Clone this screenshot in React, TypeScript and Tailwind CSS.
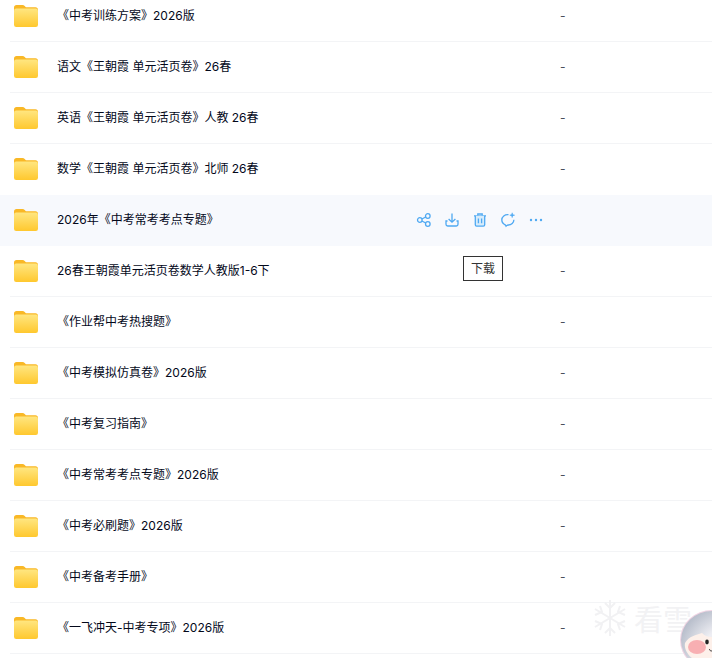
const rows = [
  "《中考训练方案》2026版",
  "语文《王朝霞 单元活页卷》26春",
  "英语《王朝霞 单元活页卷》人教 26春",
  "数学《王朝霞 单元活页卷》北师 26春",
  "2026年《中考常考考点专题》",
  "26春王朝霞单元活页卷数学人教版1-6下",
  "《作业帮中考热搜题》",
  "《中考模拟仿真卷》2026版",
  "《中考复习指南》",
  "《中考常考考点专题》2026版",
  "《中考必刷题》2026版",
  "《中考备考手册》",
  "《一飞冲天-中考专项》2026版",
];

const FolderIcon = () => (
  <svg width="24" height="22" viewBox="0 0 24 22" className="shrink-0">
    <defs>
      <linearGradient id="folderFront" x1="0" y1="0" x2="0" y2="1">
        <stop offset="0" stopColor="#ffe680" />
        <stop offset="1" stopColor="#ffc82e" />
      </linearGradient>
    </defs>
    <path d="M0 2.5C0 1 1 0 2.5 0h6c1 0 1.6.4 2.2 1l1.2 1.2H21.5C23 2.2 24 3.2 24 4.7V8H0z" fill="#f9b826" />
    <rect x="0" y="3.6" width="24" height="18.4" rx="2.2" fill="url(#folderFront)" />
  </svg>
);

const ActionIcons = () => (
  <div className="flex items-center gap-[12px] text-[#4fa9f2]">
    <svg width="16" height="16" viewBox="0 0 16 16" fill="none" stroke="currentColor" strokeWidth="1.3">
      <circle cx="3.8" cy="8" r="2.3" />
      <circle cx="11.8" cy="4" r="2.3" />
      <circle cx="11.8" cy="12" r="2.3" />
      <path d="M5.9 7 9.7 5M5.9 9l3.8 2" />
    </svg>
    <svg width="16" height="16" viewBox="0 0 16 16" fill="none" stroke="currentColor" strokeWidth="1.3">
      <path d="M8 1.5v8.500M4.600 7 8 10.200 11.400 7" />
      <path d="M3.500 9H2v3.300c0 1 .7 1.700 1.700 1.700h8.600c1 0 1.700-.7 1.700-1.700V9h-1.500" />
    </svg>
    <svg width="16" height="16" viewBox="0 0 16 16" fill="none" stroke="currentColor" strokeWidth="1.3">
      <path d="M2 3.800h12M5.800 3.600V2h4.400v1.600" />
      <path d="M3.300 3.800v9c0 .8.500 1.300 1.300 1.300h6.800c.8 0 1.300-.5 1.300-1.300v-9" fill="#d7ecfb" />
      <path d="M6.400 6.600v4.600M9.600 6.600v4.600" />
    </svg>
    <svg width="16" height="16" viewBox="0 0 16 16" fill="none" stroke="currentColor" strokeWidth="1.3">
      <path d="M8.500 2.700C4.800 2.300 1.800 4.800 1.800 8c0 2.100 1.100 3.600 2.700 4.500.9.500 1.200.5 1.600 1.700.9-.6 1.100-1.200 2-1.200 3.300 0 5.800-2.200 5.800-5.200" />
      <path d="M12.200 .8c.2 1.700.7 2.200 2.400 2.400-1.700.2-2.200.7-2.400 2.400-.2-1.700-.7-2.200-2.400-2.400 1.700-.2 2.200-.7 2.400-2.400z" fill="currentColor" strokeWidth="0.6" />
    </svg>
    <svg width="16" height="16" viewBox="0 0 16 16" fill="currentColor">
      <circle cx="3" cy="8" r="1.2" />
      <circle cx="8" cy="8" r="1.2" />
      <circle cx="13" cy="8" r="1.2" />
    </svg>
  </div>
);

const Mascot = () => (
  <svg width="32" height="48" viewBox="0 0 32 48" className="absolute right-0 bottom-0">
    <defs>
      <radialGradient id="hood" cx="0.75" cy="0.7" r="0.8">
        <stop offset="0.5" stopColor="#eeeef3" />
        <stop offset="1" stopColor="#b9bfcc" />
      </radialGradient>
    </defs>
    <ellipse cx="32" cy="30" rx="32" ry="30" fill="#f1d5e4" />
    <ellipse cx="32" cy="30" rx="31" ry="29" fill="url(#hood)" />
    <path d="M5 33c4-7 11-8 17-10 3 3 6 4 10 4v21H12C7 44 4 38 5 33z" fill="#fdf0ea" />
    <ellipse cx="17" cy="37" rx="9" ry="7" fill="#f7a3a8" opacity="0.85" />
    <ellipse cx="27" cy="32" rx="1.800" ry="2.400" fill="#222" />
    <path d="M29.500 39c0 1.500.8 2 2.500 2" stroke="#444" fill="none" strokeWidth="1" />
  </svg>
);

const Watermark = () => (
  <div className="absolute left-[593px] top-[599px] flex items-center gap-[7px] opacity-90">
    <svg width="34" height="38" viewBox="0 0 34 38" fill="none" stroke="#f0f0f2" strokeWidth="2">
      <path d="M17 1v36M2 10l30 18M32 10 2 28" />
      <path d="M12 4l5 5 5-5M12 34l5-5 5 5M2 16l7-3-2-6M32 16l-7-3 2-6M2 22l7 3-2 6M32 22l-7 3 2 6" />
    </svg>
    <span className="text-[29px] leading-none text-[#f1f1f3] font-['Noto_Sans_CJK_SC',sans-serif]">看雪</span>
  </div>
);

export default function App() {
  return (
    <div className="relative h-[658px] w-[712px] overflow-hidden bg-white font-['Inter','Noto_Sans_CJK_SC',sans-serif] text-[12px] text-[#03081a]">
      <div className="mt-[-9px] flex flex-col">
        {rows.map((name, i) => (
          <div key={name} className={`h-[51px] ${i === 4 ? "bg-[#f7f9fd]" : ""}`}>
            <div className="flex h-[50px] items-center pl-[14px]">
              <FolderIcon />
              <div className="ml-[19px] w-[359px] truncate">{name}</div>
              <div className="w-[144px]">{i === 4 ? <ActionIcons /> : null}</div>
              {i === 4 ? null : <div className="text-[#4a4f5c]">-</div>}
            </div>
            <div className={`ml-[10px] h-px ${i === 3 || i === 4 ? "bg-transparent" : "bg-[#f3f4f6]"}`} />
          </div>
        ))}
      </div>

      <div className="absolute left-[463px] top-[256px] flex h-[25px] w-[40px] items-center justify-center border border-[#333] bg-white text-[#333]">
        下载
      </div>
      <Watermark />
      <Mascot />
    </div>
  );
}
